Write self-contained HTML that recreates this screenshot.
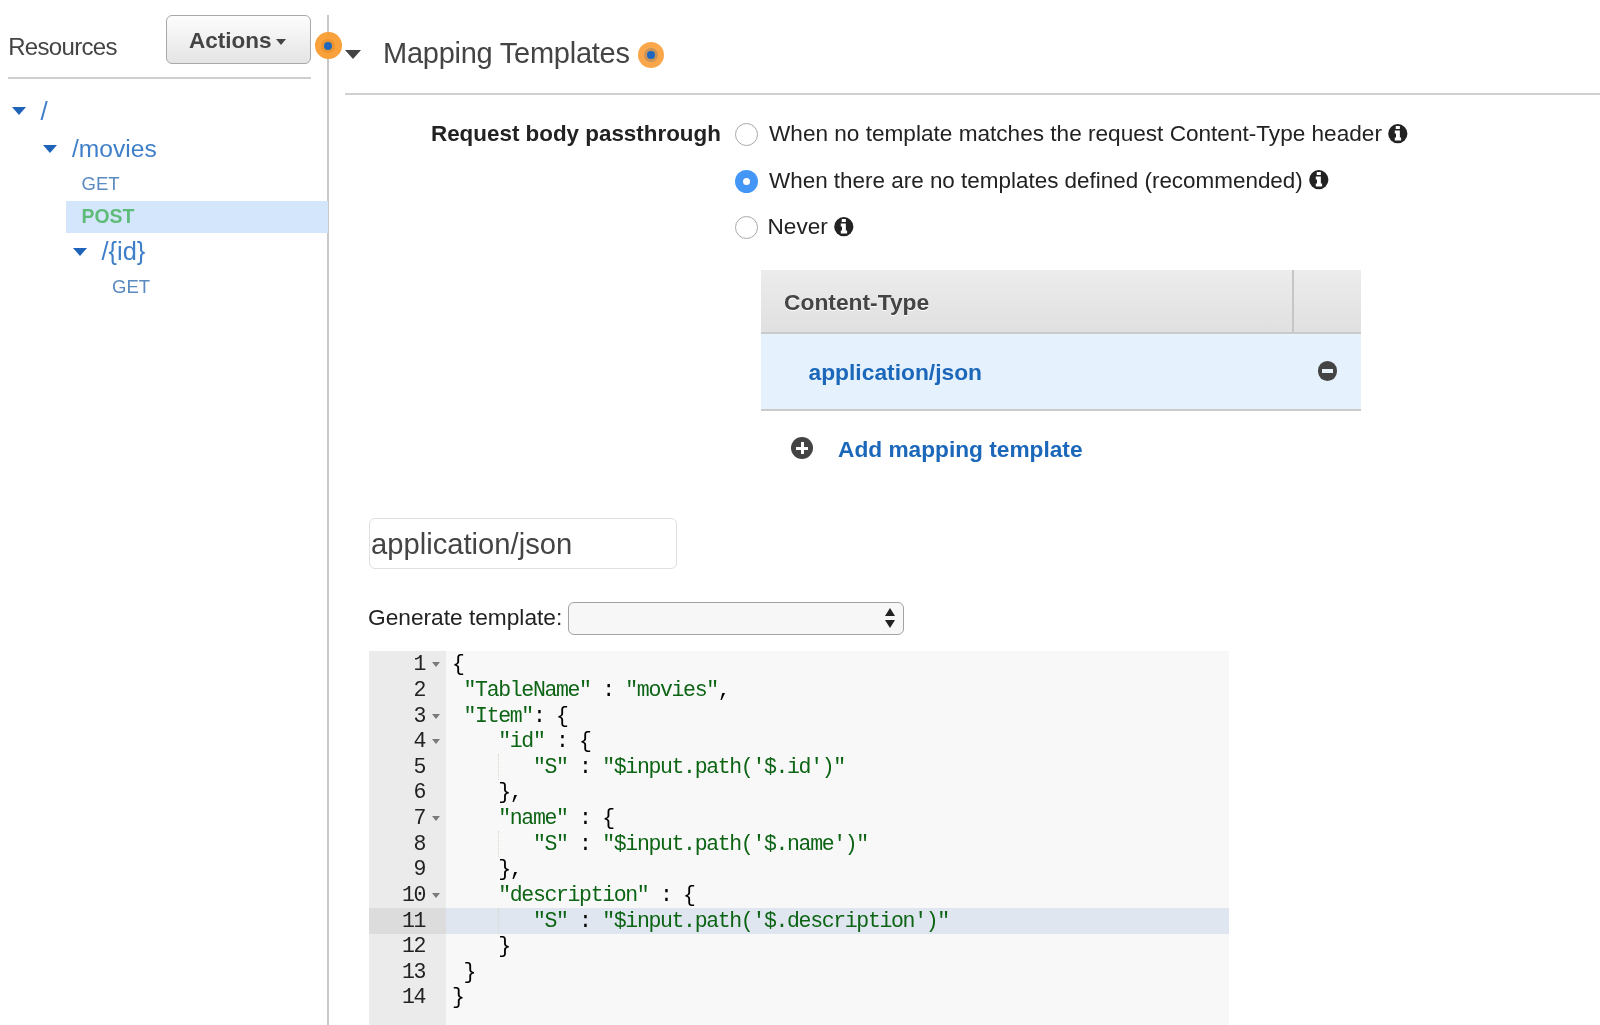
<!DOCTYPE html>
<html><head><meta charset="utf-8">
<style>
*{margin:0;padding:0;box-sizing:border-box}
html,body{width:1600px;height:1025px;overflow:hidden;background:#fff}
body{will-change:transform;position:relative;font-family:"Liberation Sans",sans-serif;color:#222}
.a{position:absolute;white-space:pre;line-height:1}
.tri{position:absolute;width:0;height:0;border-left:7px solid transparent;border-right:7px solid transparent;border-top:8px solid #1f63b8}
.radio{position:absolute;width:23px;height:23px;border-radius:50%;border:1px solid #a9a9a9;background:#fff}
.radio.on{background:#4497f6;border:none}
.radio.on:after{content:"";position:absolute;left:8px;top:8px;width:7px;height:7px;border-radius:50%;background:#fff}
.info{position:absolute;width:20px;height:20px}
.code{position:absolute;font-family:"Liberation Mono",monospace;font-size:21.5px;letter-spacing:-1.35px;line-height:25.63px;white-space:pre;color:#000}
.s{color:#0c6414}
.ln{position:absolute;font-family:"Liberation Mono",monospace;font-size:21.5px;letter-spacing:-1.35px;line-height:25.63px;white-space:pre;color:#222;text-align:right}
</style></head><body>

<!-- LEFT PANEL -->
<div class="a" style="left:8.2px;top:34.7px;font-size:24px;color:#444;letter-spacing:-0.67px">Resources</div>
<div style="position:absolute;left:166px;top:15px;width:145px;height:49px;border:1.5px solid #a8a8a8;border-radius:6px;background:linear-gradient(#fdfdfd,#e4e4e4)"></div>
<div class="a" style="left:189px;top:29.5px;font-size:22.5px;font-weight:700;color:#444">Actions</div>
<div style="position:absolute;left:275.5px;top:39px;width:0;height:0;border-left:5.5px solid transparent;border-right:5.5px solid transparent;border-top:6.5px solid #444"></div>
<div style="position:absolute;left:8px;top:77px;width:303px;height:2px;background:#cfcfcf"></div>
<div style="position:absolute;left:327.25px;top:15px;width:1.75px;height:1010px;background:#c8c8c8"></div>

<div class="tri" style="left:12px;top:107px"></div>
<div class="a" style="left:40.5px;top:97.5px;font-size:26px;color:#3f7fc9">/</div>
<div class="tri" style="left:43px;top:145px"></div>
<div class="a" style="left:72px;top:136.5px;font-size:24.6px;color:#3f7fc9">/movies</div>
<div class="a" style="left:81.5px;top:174.5px;font-size:18.5px;color:#5a8ac0">GET</div>
<div style="position:absolute;left:66px;top:201px;width:262px;height:32px;background:#d4e6fb"></div>
<div class="a" style="left:81.5px;top:206.5px;font-size:19.4px;font-weight:700;color:#5fbc78">POST</div>
<div class="tri" style="left:73px;top:248px"></div>
<div class="a" style="left:101.5px;top:239px;font-size:25.4px;color:#3f7fc9">/{id}</div>
<div class="a" style="left:112px;top:277.5px;font-size:18.5px;color:#5a8ac0">GET</div>

<!-- orange beacon 1 -->
<div style="position:absolute;left:315px;top:32.3px;width:26.5px;height:26.5px;border-radius:50%;background:rgba(249,156,48,0.95)"></div>
<div style="position:absolute;left:321px;top:39px;width:14px;height:14px;border-radius:50%;background:#eb9630"></div>
<div style="position:absolute;left:324px;top:42px;width:8.2px;height:8.2px;border-radius:50%;background:#1f66bd"></div>

<!-- MAIN HEADER -->
<div style="position:absolute;left:345px;top:50px;width:0;height:0;border-left:8px solid transparent;border-right:8px solid transparent;border-top:9px solid #444"></div>
<div class="a" style="left:383px;top:39px;font-size:29px;color:#444;letter-spacing:-0.25px">Mapping Templates</div>
<div style="position:absolute;left:638px;top:42px;width:26px;height:26px;border-radius:50%;background:#f9a74a"></div>
<div style="position:absolute;left:644px;top:48px;width:14px;height:14px;border-radius:50%;background:#c89358"></div>
<div style="position:absolute;left:647px;top:51px;width:8px;height:8px;border-radius:50%;background:#1f66c0"></div>
<div style="position:absolute;left:345px;top:93px;width:1255px;height:2px;background:#d0d0d0"></div>

<!-- RADIO SECTION -->
<div class="a" style="left:431px;top:122.5px;font-size:22.4px;font-weight:700;color:#222">Request body passthrough</div>
<div class="radio" style="left:735px;top:123px"></div>
<div class="a" style="left:769px;top:123px;font-size:22.6px;color:#222">When no template matches the request Content-Type header</div>
<div class="radio on" style="left:735px;top:170px"></div>
<div class="a" style="left:769px;top:170px;font-size:22.45px;color:#222">When there are no templates defined (recommended)</div>
<div class="radio" style="left:735px;top:216px"></div>
<div class="a" style="left:767.5px;top:216px;font-size:22.6px;color:#222">Never</div>

<svg class="info" style="left:1388px;top:123.5px" width="20" height="20" viewBox="0 0 20 20"><circle cx="9.8" cy="9.7" r="9.6" fill="#222"/><rect x="7.75" y="2" width="4.1" height="3" fill="#fff"/><path d="M6.8 6.6H11.85V13.4H13.1V16.4H6.8V13.4H8V9.6H6.8Z" fill="#fff"/></svg>
<svg class="info" style="left:1308.7px;top:170px" width="20" height="20" viewBox="0 0 20 20"><circle cx="9.8" cy="9.7" r="9.6" fill="#222"/><rect x="7.75" y="2" width="4.1" height="3" fill="#fff"/><path d="M6.8 6.6H11.85V13.4H13.1V16.4H6.8V13.4H8V9.6H6.8Z" fill="#fff"/></svg>
<svg class="info" style="left:833.7px;top:216.6px" width="20" height="20" viewBox="0 0 20 20"><circle cx="9.8" cy="9.7" r="9.6" fill="#222"/><rect x="7.75" y="2" width="4.1" height="3" fill="#fff"/><path d="M6.8 6.6H11.85V13.4H13.1V16.4H6.8V13.4H8V9.6H6.8Z" fill="#fff"/></svg>
<!-- TABLE -->
<div style="position:absolute;left:761px;top:270px;width:600px;height:64px;background:linear-gradient(#ececec,#e0e0e0);border-bottom:2px solid #cacaca"></div>
<div style="position:absolute;left:1292px;top:270px;width:1.5px;height:62px;background:#c6c6c6"></div>
<div class="a" style="left:784px;top:291px;font-size:22.8px;font-weight:700;color:#444;text-shadow:0 1px 0 #fff">Content-Type</div>
<div style="position:absolute;left:761px;top:334px;width:600px;height:77px;background:#e5f1fc;border-top:1px solid #e9f5fd;border-bottom:2px solid #cbcbcb"></div>
<div class="a" style="left:808.5px;top:361px;font-size:22.8px;font-weight:700;color:#1b67b9">application/json</div>
<div style="position:absolute;left:1317.5px;top:361px;width:19.5px;height:19.5px;border-radius:50%;background:#444"></div>
<div style="position:absolute;left:1322px;top:369px;width:11px;height:3.5px;background:#e8f2fb"></div>

<!-- ADD -->
<div style="position:absolute;left:791px;top:437px;width:22px;height:22px;border-radius:50%;background:#444"></div>
<div style="position:absolute;left:796px;top:446.5px;width:12px;height:3px;background:#fff"></div>
<div style="position:absolute;left:800.5px;top:442px;width:3px;height:12px;background:#fff"></div>
<div class="a" style="left:838px;top:438px;font-size:22.7px;font-weight:700;color:#1b67b9">Add mapping template</div>

<!-- INPUT -->
<div style="position:absolute;left:369px;top:518px;width:308px;height:51px;border:1.5px solid #e0e0e0;border-radius:6px;background:#fff"></div>
<div class="a" style="left:371px;top:529.5px;font-size:29.2px;color:#444">application/json</div>

<!-- GENERATE -->
<div class="a" style="left:368px;top:605.5px;font-size:22.7px;color:#222">Generate template:</div>
<div style="position:absolute;left:568px;top:602px;width:336px;height:33px;border:1.5px solid #a3a3a3;border-radius:6px;background:#f7f7f7"></div>
<div style="position:absolute;left:885px;top:607.7px;width:0;height:0;border-left:5.5px solid transparent;border-right:5.5px solid transparent;border-bottom:8.8px solid #222"></div>
<div style="position:absolute;left:885px;top:620px;width:0;height:0;border-left:5.5px solid transparent;border-right:5.5px solid transparent;border-top:8.8px solid #222"></div>

<!-- EDITOR -->
<div style="position:absolute;left:369px;top:651px;width:860px;height:374px;background:#f8f8f8"></div>
<div style="position:absolute;left:369px;top:651px;width:77px;height:374px;background:#ebebeb"></div>
<div style="position:absolute;left:369px;top:907.90px;width:77px;height:25.63px;background:#dcdcdc"></div>
<div style="position:absolute;left:446px;top:907.90px;width:783px;height:25.63px;background:#e0e6f0"></div>
<div style="position:absolute;left:498px;top:754.12px;width:0;height:25.63px;border-left:1px dotted #d8d8c8"></div>
<div style="position:absolute;left:498px;top:831.01px;width:0;height:25.63px;border-left:1px dotted #d8d8c8"></div>
<div style="position:absolute;left:498px;top:907.90px;width:0;height:25.63px;border-left:1px dotted #d8d8c8"></div>
<div class="ln" style="left:369px;top:652.3px;width:56px">1
2
3
4
5
6
7
8
9
10
11
12
13
14</div>
<div style="position:absolute;left:432px;top:662.40px;width:0;height:0;border-left:4px solid transparent;border-right:4px solid transparent;border-top:5.5px solid #7a7a7a"></div>
<div style="position:absolute;left:432px;top:713.66px;width:0;height:0;border-left:4px solid transparent;border-right:4px solid transparent;border-top:5.5px solid #7a7a7a"></div>
<div style="position:absolute;left:432px;top:739.29px;width:0;height:0;border-left:4px solid transparent;border-right:4px solid transparent;border-top:5.5px solid #7a7a7a"></div>
<div style="position:absolute;left:432px;top:816.18px;width:0;height:0;border-left:4px solid transparent;border-right:4px solid transparent;border-top:5.5px solid #7a7a7a"></div>
<div style="position:absolute;left:432px;top:893.07px;width:0;height:0;border-left:4px solid transparent;border-right:4px solid transparent;border-top:5.5px solid #7a7a7a"></div>
<div class="code" style="left:452px;top:652.3px">{
 <span class="s">"TableName"</span> : <span class="s">"movies"</span>,
 <span class="s">"Item"</span>: {
    <span class="s">"id"</span> : {
       <span class="s">"S"</span> : <span class="s">"$input.path('$.id')"</span>
    },
    <span class="s">"name"</span> : {
       <span class="s">"S"</span> : <span class="s">"$input.path('$.name')"</span>
    },
    <span class="s">"description"</span> : {
       <span class="s">"S"</span> : <span class="s">"$input.path('$.description')"</span>
    }
 }
}</div>
</body></html>
